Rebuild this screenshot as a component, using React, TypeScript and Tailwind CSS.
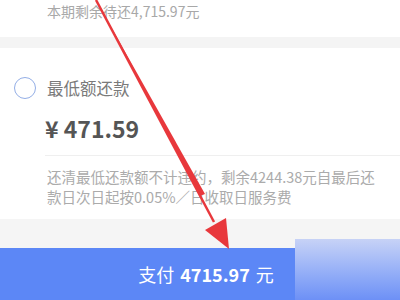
export default function App() {
  return (
    <div
      className="relative h-[300px] w-[400px] overflow-hidden bg-white"
      style={{ fontFamily: '"Noto Sans CJK SC", "Noto Sans", sans-serif' }}
    >
      <div className="h-[37px] pl-[47px] pt-[4px] text-[14px] leading-[14px] text-[#a8a8a8]">
        本期剩余待还4,715.97元
      </div>
      <div className="h-[11px] bg-[#f4f4f4]" />

      <div className="flex h-[171px] flex-col bg-white">
        <div className="flex items-center pl-[14px] pt-[29px]">
          <div className="h-[22px] w-[22px] rounded-full border-[1.5px] border-[#93aee6]" />
          <span className="ml-[11px] text-[16.5px] leading-none text-[#7a7a7a]">最低额还款</span>
        </div>
        <div className="mt-[18px] pl-[45px] text-[23px] font-semibold leading-none text-[#555555]">
          ¥ 471.59
        </div>
        <div className="ml-[45px] mt-[15px] h-px bg-[#efefef]" />
        <div className="pl-[47px] pr-[14px] pt-[11px] text-[14.5px] leading-[20px] text-[#ababab]">
          <div>还清最低还款额不计违约，剩余4244.38元自最后还</div>
          <div>款日次日起按0.05%／日收取日服务费</div>
        </div>
      </div>

      <div className="h-[29px] bg-[#f5f5f5]" />

      <div className="flex h-[52px] items-center justify-center bg-[#5c87f6] pl-[12px] text-[18px] text-white">
        <span>支付</span>
        <span className="ml-[6px] font-bold">4715.97</span>
        <span className="ml-[6px]">元</span>
      </div>

      <div className="absolute left-[295px] top-[239px] h-[61px] w-[105px] bg-gradient-to-b from-[#c7d2f6] to-[#6d90f6]" />

      <svg className="absolute left-0 top-0" width="400" height="300" viewBox="0 0 400 300">
        <path d="M96 0 L200 196 L205 194 Z" fill="#e8383c" />
        <line x1="96" y1="0" x2="214" y2="222" stroke="#e8383c" strokeWidth="2.5" />
        <path d="M205 230 L226 218 L229 249 Z" fill="#e8383c" />
      </svg>
    </div>
  );
}
